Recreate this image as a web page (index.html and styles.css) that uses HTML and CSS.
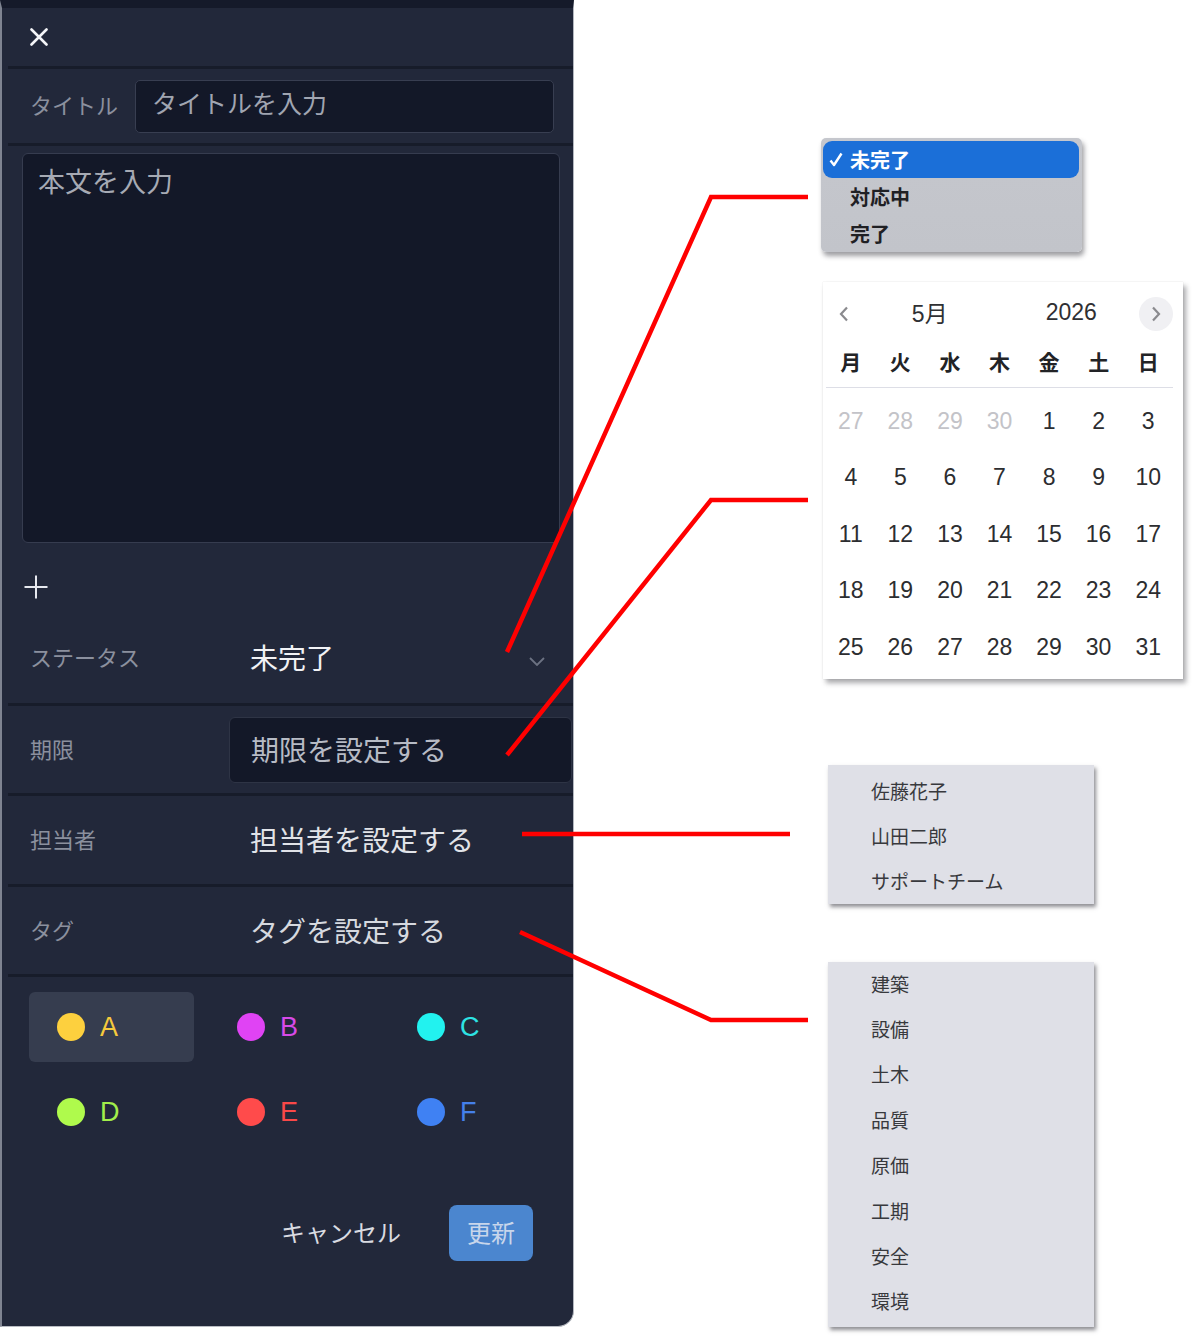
FILE: index.html
```html
<!DOCTYPE html>
<html lang="ja">
<head>
    <meta charset="UTF-8">
    <meta name="viewport" content="width=device-width, initial-scale=1.0">
    <title>タスク編集</title>
    <link rel="stylesheet" href="styles.css">
</head>
<body>
<div class="page">

    <!-- edit panel -->
    <section class="editor">
        <header class="editor-head">
            <button type="button" class="close-btn" aria-label="閉じる">
                <svg width="18" height="18" viewBox="0 0 18 18">
                    <path d="M1.5 1.5 L16.5 16.5 M16.5 1.5 L1.5 16.5" stroke="#f4f5f8" stroke-width="2.6" stroke-linecap="round"/>
                </svg>
            </button>
        </header>

        <div class="row row-title">
            <label class="label label-title" for="title">タイトル</label>
            <input id="title" class="title-input" type="text" placeholder="タイトルを入力">
        </div>

        <div class="body-wrap">
            <textarea class="body-input" placeholder="本文を入力"></textarea>
        </div>

        <div class="add-row">
            <svg width="24" height="24" viewBox="0 0 24 24">
                <path d="M12 0.5 V23.5 M0.5 12 H23.5" stroke="#e6e8ee" stroke-width="2"/>
            </svg>
        </div>

        <div class="row row-status">
            <span class="label">ステータス</span>
            <span class="value value-status">未完了</span>
            <svg class="chevron" width="16" height="9" viewBox="0 0 16 9">
                <path d="M1 1 L8 8 L15 1" fill="none" stroke="#6c7282" stroke-width="1.8"/>
            </svg>
        </div>

        <div class="row row-deadline">
            <span class="label label-short">期限</span>
            <div class="date-box">期限を設定する</div>
        </div>

        <div class="row row-assignee">
            <span class="label">担当者</span>
            <span class="value value-assignee">担当者を設定する</span>
        </div>

        <div class="row row-tag">
            <span class="label">タグ</span>
            <span class="value value-tag">タグを設定する</span>
        </div>

        <div class="tag-grid">
            <div class="chip chip-selected tag-a"><span class="dot"></span><span class="chip-name">A</span></div>
            <div class="chip tag-b"><span class="dot"></span><span class="chip-name">B</span></div>
            <div class="chip tag-c"><span class="dot"></span><span class="chip-name">C</span></div>
            <div class="chip tag-d"><span class="dot"></span><span class="chip-name">D</span></div>
            <div class="chip tag-e"><span class="dot"></span><span class="chip-name">E</span></div>
            <div class="chip tag-f"><span class="dot"></span><span class="chip-name">F</span></div>
        </div>

        <footer class="editor-foot">
            <button type="button" class="btn-cancel">キャンセル</button>
            <button type="button" class="btn-save">更新</button>
        </footer>
    </section>

    <!-- status select -->
    <ul class="menu status-menu">
        <li class="menu-item is-checked">
            <span class="check">
                <svg width="14" height="15" viewBox="0 0 14 15"><path d="M1.5 8.5 L5 13 L12.5 1.5" fill="none" stroke="#ffffff" stroke-width="2.4" stroke-linejoin="round"/></svg>
            </span>未完了
        </li>
        <li class="menu-item"><span class="check"></span>対応中</li>
        <li class="menu-item"><span class="check"></span>完了</li>
    </ul>

    <!-- date picker -->
    <div class="calendar">
        <div class="cal-head">
            <button type="button" class="cal-nav" aria-label="前の月">
                <svg width="10" height="16" viewBox="0 0 10 16"><path d="M8 1.5 L2 8 L8 14.5" fill="none" stroke="#8a8a8e" stroke-width="2.2"/></svg>
            </button>
            <span class="cal-month">5月</span>
            <span class="cal-year">2026</span>
            <button type="button" class="cal-nav cal-next" aria-label="次の月">
                <svg width="10" height="16" viewBox="0 0 10 16"><path d="M2 1.5 L8 8 L2 14.5" fill="none" stroke="#8a8a8e" stroke-width="2.2"/></svg>
            </button>
        </div>
        <div class="cal-week">
            <span>月</span><span>火</span><span>水</span><span>木</span><span>金</span><span>土</span><span>日</span>
        </div>
        <div class="cal-days" id="cal-days"></div>
    </div>

    <!-- assignee select -->
    <ul class="menu list-menu people-menu">
        <li>佐藤花子</li>
        <li>山田二郎</li>
        <li>サポートチーム</li>
    </ul>

    <!-- tag select -->
    <ul class="menu list-menu tag-menu">
        <li>建築</li>
        <li>設備</li>
        <li>土木</li>
        <li>品質</li>
        <li>原価</li>
        <li>工期</li>
        <li>安全</li>
        <li>環境</li>
    </ul>

    <!-- callout lines -->
    <svg class="callouts" width="1200" height="1344" viewBox="0 0 1200 1344">
        <polyline points="507,652 711,197 808,197"/>
        <polyline points="507,755 711,500 808,500"/>
        <polyline points="522,834 790,834"/>
        <polyline points="520,932 711,1020 808,1020"/>
    </svg>
</div>

<script>
    // May 2026 starts on a Friday (Monday-first grid)
    const days = document.getElementById('cal-days');
    const cells = [];
    [27, 28, 29, 30].forEach(d => cells.push(`<span class="day day-other">${d}</span>`));
    for (let d = 1; d <= 31; d++) {
        cells.push(`<span class="day">${d}</span>`);
    }
    days.innerHTML = cells.join('');
</script>
</body>
</html>
```

FILE: styles.css
```css
* {
    box-sizing: border-box;
}

body {
    margin: 0;
    background-color: #ffffff;
    font-family: 'Liberation Sans', 'Noto Sans CJK JP', sans-serif;
}

button {
    font-family: inherit;
    background: none;
    border: none;
    padding: 0;
    cursor: pointer;
}

.page {
    position: relative;
    width: 1200px;
    height: 1344px;
    overflow: hidden;
}

/* ---------- edit panel ---------- */

.editor {
    width: 574px;
    height: 1327px;
    background-color: #22283a;
    border-top: 8px solid #151a2a;
    border-left: 2px solid #7f8491;
    border-right: 1px solid #b3b7bf;
    border-bottom: 1px solid #b9bcc3;
    border-bottom-right-radius: 16px;
    overflow: hidden;
    display: flex;
    flex-direction: column;
}

.editor-head {
    height: 61px;
    flex: none;
    margin-left: 6px;
    padding-left: 22px;
    display: flex;
    align-items: center;
    border-bottom: 3px solid #171c2a;
}

.close-btn {
    display: flex;
}

.row {
    flex: none;
    display: flex;
    align-items: center;
    margin-left: 6px;
    padding-left: 22px;
    border-bottom: 3px solid #171c2a;
}

.label {
    flex: none;
    width: 220px;
    padding-bottom: 4px;
    font-size: 22px;
    color: #8b909e;
}

.label-title {
    width: auto;
}

.label-short {
    width: 199px;
}

.row-title {
    height: 77px;
}

.title-input {
    width: 419px;
    height: 53px;
    margin-left: auto;
    margin-right: 19px;
    padding: 0 0 3px 16px;
    background-color: #131828;
    border: 1px solid #383e51;
    border-radius: 5px;
    font-family: inherit;
    font-size: 25px;
    color: #e6e8ee;
    outline: none;
}

.title-input::placeholder {
    color: #a0a5b1;
}

.body-wrap {
    flex: none;
    height: 397px;
    padding: 7px 0 0 20px;
}

.body-input {
    display: block;
    width: 538px;
    height: 390px;
    padding: 12px 15px;
    background-color: #131828;
    border: 1px solid #363c4f;
    border-radius: 6px;
    font-family: inherit;
    font-size: 27px;
    line-height: 34px;
    color: #e6e8ee;
    resize: none;
    outline: none;
}

.body-input::placeholder {
    color: #a6aab4;
}

.add-row {
    flex: none;
    height: 70px;
    padding: 32px 0 0 22px;
}

.add-row svg {
    display: block;
}

.row-status {
    height: 93px;
    padding-right: 28px;
}

.row-deadline {
    height: 90px;
}

.row-assignee {
    height: 91px;
}

.row-tag {
    height: 90px;
}

.value {
    flex: 1;
    font-size: 28px;
    padding-bottom: 2px;
}

.value-status {
    color: #f1f2f5;
}

.value-assignee {
    color: #e1e3e8;
}

.value-tag {
    color: #d6d9df;
}

.chevron {
    flex: none;
    margin-top: 6px;
}

.date-box {
    flex: 1;
    height: 66px;
    margin-right: 1px;
    padding: 0 0 2px 21px;
    display: flex;
    align-items: center;
    background-color: #131828;
    border: 1px solid #2e3445;
    border-radius: 6px;
    font-size: 28px;
    color: #b7bbc5;
}

/* ---------- tags ---------- */

.tag-grid {
    flex: none;
    display: grid;
    grid-template-columns: repeat(3, 165px);
    grid-auto-rows: 70px;
    column-gap: 15px;
    row-gap: 15px;
    padding: 15px 0 0 27px;
}

.chip {
    display: flex;
    align-items: center;
    gap: 15px;
    padding-left: 28px;
    border-radius: 6px;
}

.chip-selected {
    background-color: #363d4f;
}

.dot {
    width: 28px;
    height: 28px;
    border-radius: 50%;
    background-color: var(--tag);
}

.chip-name {
    font-size: 27px;
    color: var(--tag-text);
}

.tag-a { --tag: #fdd03e; --tag-text: #f6ca3c; }
.tag-b { --tag: #e043f4; --tag-text: #d74ae8; }
.tag-c { --tag: #22f2ef; --tag-text: #2de3e4; }
.tag-d { --tag: #affa4c; --tag-text: #a2ee4a; }
.tag-e { --tag: #ff4b4b; --tag-text: #f94848; }
.tag-f { --tag: #3f81f3; --tag-text: #4580ea; }

/* ---------- footer ---------- */

.editor-foot {
    flex: none;
    display: flex;
    justify-content: flex-end;
    align-items: center;
    gap: 48px;
    margin-top: 58px;
    padding-right: 40px;
}

.btn-cancel {
    padding-bottom: 4px;
    font-size: 24px;
    color: #d9dbe1;
}

.btn-save {
    width: 84px;
    height: 56px;
    padding-bottom: 3px;
    border-radius: 8px;
    background-color: #4b86cf;
    font-size: 24px;
    color: #c8d6eb;
}

/* ---------- menus ---------- */

.menu {
    position: absolute;
    margin: 0;
    list-style: none;
}

.status-menu {
    left: 821px;
    top: 138px;
    width: 261px;
    height: 114px;
    padding: 3px 3px 0 2px;
    background: linear-gradient(#c5c7cd, #c2c4ca);
    border-radius: 5px;
    box-shadow: 2px 4px 5px rgba(40, 40, 48, 0.45);
}

.menu-item {
    height: 37px;
    display: flex;
    align-items: center;
    padding-left: 6px;
    border-radius: 9px;
    font-size: 20px;
    font-weight: 600;
    color: #1f2024;
}

.menu-item.is-checked {
    background-color: #1b6fd8;
    color: #ffffff;
}

.check {
    flex: none;
    width: 21px;
    display: flex;
    align-items: center;
}

.list-menu {
    left: 828px;
    width: 266px;
    padding: 0 0 0 43px;
    background-color: #dfe0e7;
    box-shadow: 2px 3px 4px rgba(50, 50, 58, 0.55);
}

.list-menu li {
    display: flex;
    align-items: center;
    padding-bottom: 3px;
    font-size: 19px;
    color: #38393d;
}

.people-menu {
    top: 765px;
    height: 139px;
    padding-top: 4px;
}

.people-menu li {
    height: 45px;
}

.tag-menu {
    top: 962px;
    height: 365px;
}

.tag-menu li {
    height: 45.4px;
}

/* ---------- calendar ---------- */

.calendar {
    position: absolute;
    left: 823px;
    top: 282px;
    width: 360px;
    height: 397px;
    padding: 0 10px 0 3px;
    background-color: #ffffff;
    box-shadow: 3px 4px 5px rgba(40, 40, 48, 0.4), 0 0 1px rgba(0, 0, 0, 0.15);
}

.cal-head {
    height: 64px;
    display: flex;
    align-items: center;
}

.cal-nav {
    flex: none;
    width: 36px;
    height: 34px;
    display: flex;
    align-items: center;
    justify-content: center;
}

.cal-next {
    width: 34px;
    border-radius: 50%;
    background-color: #f0f0f3;
}

.cal-month,
.cal-year {
    flex: 1;
    padding-bottom: 4px;
    text-align: center;
    font-size: 23px;
    color: #2f3033;
}

.cal-year {
    padding-left: 6px;
}

.cal-week {
    height: 42px;
    padding-bottom: 13px;
    display: grid;
    grid-template-columns: repeat(7, 1fr);
    align-items: center;
    border-bottom: 1px solid #dddee6;
}

.cal-week span {
    text-align: center;
    font-size: 21px;
    font-weight: 700;
    color: #222326;
}

.cal-days {
    display: grid;
    grid-template-columns: repeat(7, 1fr);
    grid-auto-rows: 56.5px;
    margin-top: 5px;
}

.day {
    display: flex;
    align-items: center;
    justify-content: center;
    font-size: 23px;
    color: #2c2d30;
}

.day-other {
    color: #c3c3c8;
}

/* ---------- annotation lines ---------- */

.callouts {
    position: absolute;
    left: 0;
    top: 0;
    pointer-events: none;
}

.callouts polyline {
    fill: none;
    stroke: #ff0000;
    stroke-width: 4.5;
}
```
